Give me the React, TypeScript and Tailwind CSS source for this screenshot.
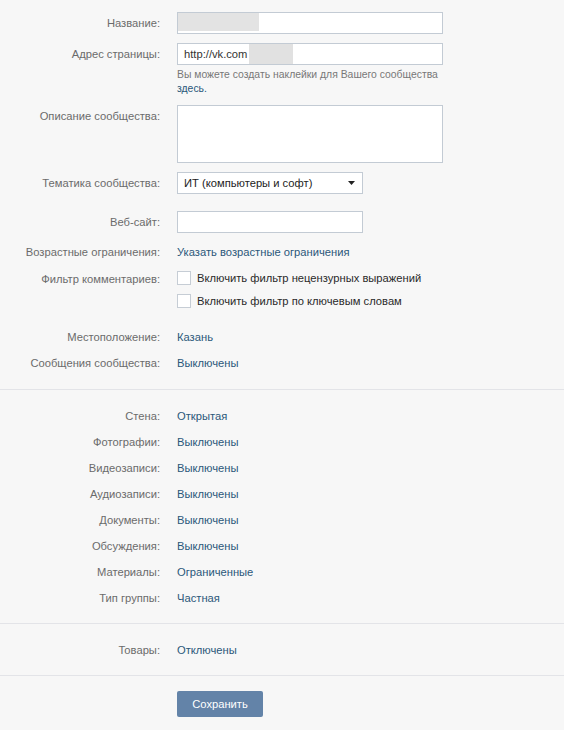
import React from 'react';

const font = { fontFamily: '"Liberation Sans", Arial, sans-serif' };

function Row({ label, children, className = '' }: { label: string; children: React.ReactNode; className?: string }) {
  return (
    <div className={`flex items-center ${className}`}>
      <div className="w-[160px] shrink-0 text-right text-[#6b6b6b]">{label}</div>
      <div className="ml-[17px] flex-1">{children}</div>
    </div>
  );
}

function TextRow({ label, value }: { label: string; value: string }) {
  return (
    <Row label={label} className="h-[26px]">
      <span className="text-[#2b587a]">{value}</span>
    </Row>
  );
}

function Checkbox({ label }: { label: string }) {
  return (
    <div className="flex items-center gap-[6px]">
      <span className="block h-[14px] w-[14px] border border-[#c6cdd5] bg-white" />
      <span className="text-[#2a2a2a]">{label}</span>
    </div>
  );
}

export default function App() {
  const mainRows = [
    ['Стена:', 'Открытая'],
    ['Фотографии:', 'Выключены'],
    ['Видеозаписи:', 'Выключены'],
    ['Аудиозаписи:', 'Выключены'],
    ['Документы:', 'Выключены'],
    ['Обсуждения:', 'Выключены'],
    ['Материалы:', 'Ограниченные'],
    ['Тип группы:', 'Частная'],
  ];

  return (
    <div className="min-h-[730px] w-[564px] bg-[#f7f7f7] pt-[12px] text-[11.2px] leading-[14px]" style={font}>
      {/* Basic info */}
      <Row label="Название:">
        <div className="flex h-[22px] w-[266px] border border-[#c3cbd4] bg-white">
          <div className="h-[18px] w-[81px] bg-[#e3e3e3]" />
        </div>
      </Row>
      <div className="mt-[9px] flex">
        <div className="w-[160px] shrink-0 pt-[4px] text-right text-[#6b6b6b]">Адрес страницы:</div>
        <div className="ml-[17px]">
          <div className="flex h-[22px] w-[266px] items-center border border-[#c3cbd4] bg-white pl-[6px] text-[#333]">
            <span>http://vk.com</span>
            <span className="ml-[2px] h-[20px] w-[44px] self-start bg-[#e1e1e1]" />
          </div>
          <p className="mt-[3px] text-[10.4px] leading-[14px] text-[#777]">
            Вы можете создать наклейки для Вашего сообщества
            <br />
            <span className="text-[#2b587a]">здесь.</span>
          </p>
        </div>
      </div>
      <div className="mt-[9px] flex">
        <div className="w-[160px] shrink-0 pt-[4px] text-right text-[#6b6b6b]">Описание сообщества:</div>
        <div className="ml-[17px] h-[58px] w-[266px] border border-[#c3cbd4] bg-white" />
      </div>
      <Row label="Тематика сообщества:" className="mt-[9px]">
        <div className="flex h-[22px] w-[186px] items-center justify-between border border-[#c3cbd4] bg-white pl-[6px] pr-[7px] text-[#222]">
          <span>ИТ (компьютеры и софт)</span>
          <svg width="7" height="4" viewBox="0 0 7 4">
            <path d="M0 0h7L3.5 4z" fill="#222" />
          </svg>
        </div>
      </Row>
      <Row label="Веб-сайт:" className="mt-[17px]">
        <div className="h-[22px] w-[186px] border border-[#c3cbd4] bg-white" />
      </Row>
      <Row label="Возрастные ограничения:" className="mt-[12px] h-[14px]">
        <span className="text-[#2b587a]">Указать возрастные ограничения</span>
      </Row>
      <div className="mt-[12px] flex">
        <div className="w-[160px] shrink-0 pt-[1px] text-right text-[#6b6b6b]">Фильтр комментариев:</div>
        <div className="ml-[17px] flex flex-col gap-[9px]">
          <Checkbox label="Включить фильтр нецензурных выражений" />
          <Checkbox label="Включить фильтр по ключевым словам" />
        </div>
      </div>
      <div className="mt-[16px]">
        <TextRow label="Местоположение:" value="Казань" />
        <TextRow label="Сообщения сообщества:" value="Выключены" />
      </div>

      {/* Sections */}
      <div className="mt-[13px] border-t border-[#e3e4e8] pb-[12px] pt-[13px]">
        {mainRows.map(([l, v]) => (
          <TextRow key={l} label={l} value={v} />
        ))}
      </div>

      {/* Market */}
      <div className="border-t border-[#e3e4e8] pb-[12px] pt-[13px]">
        <TextRow label="Товары:" value="Отключены" />
      </div>

      <div className="border-t border-[#e3e4e8] pl-[177px] pt-[15px]">
        <button className="h-[26px] w-[86px] rounded-[2px] bg-[#6383a8] text-[11.2px] text-white">Сохранить</button>
      </div>
    </div>
  );
}
